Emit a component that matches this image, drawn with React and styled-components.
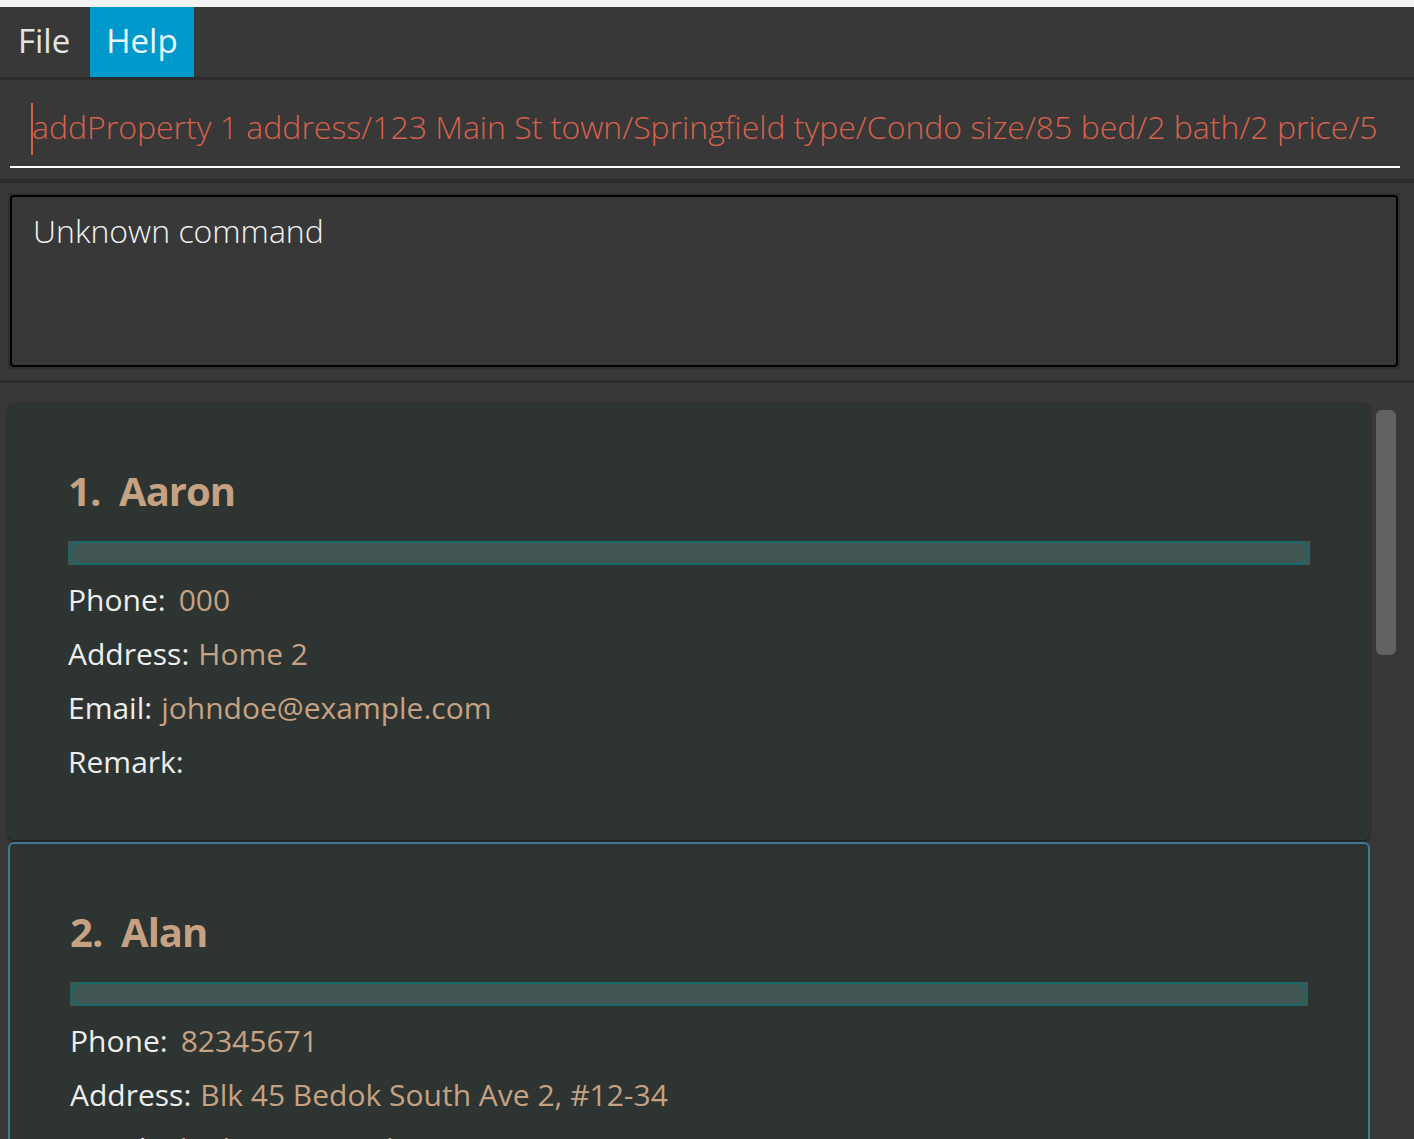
import React from "react";
import styled, { createGlobalStyle } from "styled-components";

const GlobalStyle = createGlobalStyle`
  html, body {
    margin: 0;
    padding: 0;
    background: #383838;
    overflow: hidden;
  }
  body {
    font-family: "Open Sans", "Noto Sans", sans-serif;
  }
`;

const persons = [
  {
    id: 1,
    name: "Aaron",
    phone: "000",
    address: "Home 2",
    email: "johndoe@example.com",
    remark: "",
  },
  {
    id: 2,
    name: "Alan",
    phone: "82345671",
    address: "Blk 45 Bedok South Ave 2, #12-34",
    email: "alanlee@example.com",
    remark: "",
  },
];

function App() {
  return (
    <Window>
      <GlobalStyle />
      <TitleStrip />
      <MenuBar>
        <MenuItem>File</MenuItem>
        <MenuItem active>Help</MenuItem>
      </MenuBar>
      <Divider h={3} />
      <CommandPane>
        <CommandField>
          <Caret />
          <CommandText>
            addProperty 1 address/123 Main St town/Springfield type/Condo
            size/85 bed/2 bath/2 price/500000
          </CommandText>
        </CommandField>
      </CommandPane>
      <Divider h={4} />
      <ResultPane>
        <ResultFrame>
          <ResultBox>Unknown command</ResultBox>
        </ResultFrame>
      </ResultPane>
      <Divider h={3} />
      <ListPane>
        <CardList>
          {persons.map((p, i) => (
            <Card key={p.id} selected={i === 1}>
              <Name>
                {p.id}.&nbsp;&nbsp;{p.name}
              </Name>
              <TagBar>
                <TagInner />
              </TagBar>
              <Fields>
                <Field>
                  <Label wide>Phone:</Label>
                  <Value>{p.phone}</Value>
                </Field>
                <Field>
                  <Label>Address:</Label>
                  <Value>{p.address}</Value>
                </Field>
                <Field>
                  <Label>Email:</Label>
                  <Value>{p.email}</Value>
                </Field>
                <Field>
                  <Label>Remark:</Label>
                  <Value>{p.remark}</Value>
                </Field>
              </Fields>
            </Card>
          ))}
        </CardList>
        <ScrollTrack>
          <ScrollThumb />
        </ScrollTrack>
      </ListPane>
    </Window>
  );
}

export default App;

const Window = styled.div`
  width: 1414px;
  height: 1139px;
  background: #383838;
  display: flex;
  flex-direction: column;
  overflow: hidden;
`;

const TitleStrip = styled.div`
  height: 7px;
  background: #f3f3f3;
  flex-shrink: 0;
`;

const MenuBar = styled.div`
  height: 70px;
  flex-shrink: 0;
  display: flex;
  align-items: stretch;
  padding-left: 2px;
`;

const MenuItem = styled.div`
  display: flex;
  align-items: center;
  padding: 0 16px 3px;
  font-size: 33px;
  font-weight: 400;
  color: ${({ active }) => (active ? "#eaf6fb" : "#e4e4e4")};
  background: ${({ active }) => (active ? "#0099cc" : "transparent")};
  margin-left: ${({ active }) => (active ? "4px" : "0")};
`;

const Divider = styled.div`
  height: ${({ h }) => h}px;
  background: #2c2c2c;
  flex-shrink: 0;
`;

const CommandPane = styled.div`
  height: 99px;
  flex-shrink: 0;
  padding: 0 14px 0 10px;
  display: flex;
  align-items: flex-start;
`;

const CommandField = styled.div`
  flex: 1;
  height: 86px;
  border-bottom: 2px solid #ffffff;
  display: flex;
  align-items: center;
  padding: 0 22px 0 22px;
  position: relative;
  overflow: hidden;
  white-space: nowrap;
`;

const Caret = styled.span`
  position: absolute;
  left: 21px;
  top: 23px;
  width: 2px;
  height: 52px;
  background: #d6604a;
`;

const CommandText = styled.div`
  font-size: 32px;
  font-weight: 300;
  color: #d8614c;
  overflow: hidden;
  white-space: nowrap;
  padding-top: 6px;
`;

const ResultPane = styled.div`
  height: 197px;
  flex-shrink: 0;
  padding: 10px 14px 11px 8px;
  box-sizing: border-box;
`;

const ResultFrame = styled.div`
  height: 100%;
  background: #2f2f2f;
  padding: 2px;
  box-sizing: border-box;
`;

const ResultBox = styled.div`
  height: 100%;
  box-sizing: border-box;
  border: 2px solid #000000;
  border-radius: 4px;
  background: #383838;
  padding: 12px 21px;
  font-size: 32px;
  font-weight: 300;
  color: #f4f4f4;
`;

const ListPane = styled.div`
  flex: 1;
  display: flex;
  padding: 20px 0 0 8px;
  overflow: hidden;
`;

const CardList = styled.div`
  width: 1362px;
  flex-shrink: 0;
  display: flex;
  flex-direction: column;
  gap: 2px;
`;

const Card = styled.div`
  flex-shrink: 0;
  height: ${({ selected }) => (selected ? "441px" : "437px")};
  box-sizing: border-box;
  background: #2d3432;
  border-radius: 6px;
  border: ${({ selected }) => (selected ? "2px solid #3d7a93" : "none")};
  box-shadow: ${({ selected }) =>
    selected ? "none" : "0 2px 3px rgba(0, 0, 0, 0.45)"};
  padding: 68px 60px 0 60px;
`;

const Name = styled.div`
  font-size: 40px;
  font-weight: 700;
  letter-spacing: -1px;
  color: #c6a282;
  line-height: 1;
  height: 42px;
`;

const TagBar = styled.div`
  margin-top: 28px;
  height: 24px;
  background: #415553;
`;

const TagInner = styled.div`
  height: 100%;
  box-sizing: border-box;
  border: 2px solid #176a68;
  border-radius: 12px;
`;

const Fields = styled.div`
  display: flex;
  flex-direction: column;
  margin-top: 8px;
`;

const Field = styled.div`
  display: flex;
  align-items: baseline;
  gap: 9px;
  height: 54px;
  line-height: 54px;
  font-size: 30px;
`;

const Label = styled.span`
  color: #eeeeee;
  margin-right: ${({ wide }) => (wide ? "4px" : "0")};
`;

const Value = styled.span`
  color: #c6a282;
`;

const ScrollTrack = styled.div`
  flex: 1;
  padding: 7px 18px 0 6px;
`;

const ScrollThumb = styled.div`
  height: 245px;
  background: #626262;
  border-radius: 6px;
`;
